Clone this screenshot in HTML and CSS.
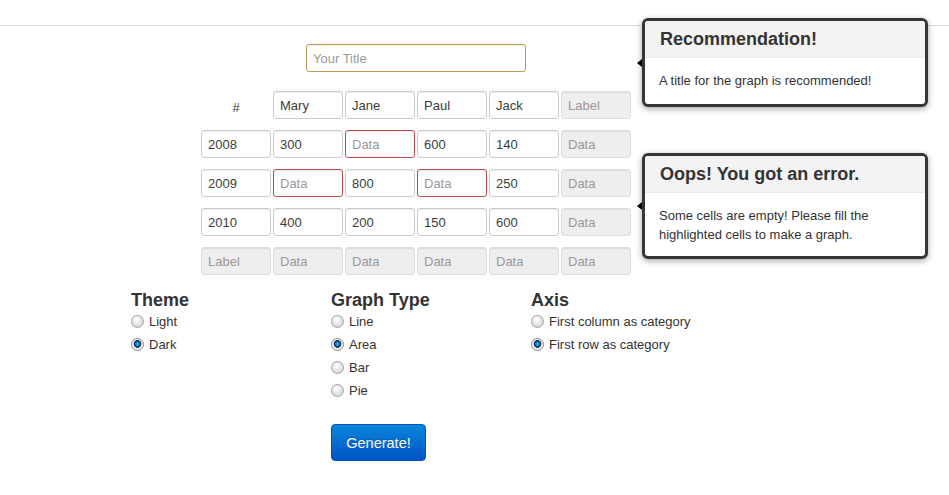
FILE: index.html
```html
<!DOCTYPE html>
<html>
<head>
<meta charset="utf-8">
<link rel="stylesheet" href="styles.css">
</head>
<body>
<div class="topbar"></div>
<div class="editor">
  <div class="title-row">
    <input class="cell title-input" type="text" placeholder="Your Title">
  </div>
  <div class="grid">
    <div class="hash">#</div>
    <input class="cell" type="text" value="Mary">
    <input class="cell" type="text" value="Jane">
    <input class="cell" type="text" value="Paul">
    <input class="cell" type="text" value="Jack">
    <input class="cell dis" type="text" placeholder="Label" disabled>

    <input class="cell" type="text" value="2008">
    <input class="cell" type="text" value="300">
    <input class="cell err" type="text" placeholder="Data">
    <input class="cell" type="text" value="600">
    <input class="cell" type="text" value="140">
    <input class="cell dis" type="text" placeholder="Data" disabled>

    <input class="cell" type="text" value="2009">
    <input class="cell err" type="text" placeholder="Data">
    <input class="cell" type="text" value="800">
    <input class="cell err" type="text" placeholder="Data">
    <input class="cell" type="text" value="250">
    <input class="cell dis" type="text" placeholder="Data" disabled>

    <input class="cell" type="text" value="2010">
    <input class="cell" type="text" value="400">
    <input class="cell" type="text" value="200">
    <input class="cell" type="text" value="150">
    <input class="cell" type="text" value="600">
    <input class="cell dis" type="text" placeholder="Data" disabled>

    <input class="cell dis" type="text" placeholder="Label" disabled>
    <input class="cell dis" type="text" placeholder="Data" disabled>
    <input class="cell dis" type="text" placeholder="Data" disabled>
    <input class="cell dis" type="text" placeholder="Data" disabled>
    <input class="cell dis" type="text" placeholder="Data" disabled>
    <input class="cell dis" type="text" placeholder="Data" disabled>
  </div>
</div>

<div class="options">
  <div class="col">
    <h3>Theme</h3>
    <label class="opt"><input type="radio" name="theme"> Light</label>
    <label class="opt"><input type="radio" name="theme" checked> Dark</label>
  </div>
  <div class="col">
    <h3>Graph Type</h3>
    <label class="opt"><input type="radio" name="type"> Line</label>
    <label class="opt"><input type="radio" name="type" checked> Area</label>
    <label class="opt"><input type="radio" name="type"> Bar</label>
    <label class="opt"><input type="radio" name="type"> Pie</label>
    <button class="btn" type="button">Generate!</button>
  </div>
  <div class="col">
    <h3>Axis</h3>
    <label class="opt"><input type="radio" name="axis"> First column as category</label>
    <label class="opt"><input type="radio" name="axis" checked> First row as category</label>
  </div>
</div>

<div class="popover pop-rec">
  <div class="pop-title">Recommendation!</div>
  <div class="pop-body">A title for the graph is recommended!</div>
</div>
<div class="popover pop-err">
  <div class="pop-title">Oops! You got an error.</div>
  <div class="pop-body">Some cells are empty! Please fill the highlighted cells to make a graph.</div>
</div>
</body>
</html>
```

FILE: styles.css
```css
html, body {
  margin: 0;
  padding: 0;
  background: #fff;
}
body {
  font-family: "Liberation Sans", Arial, sans-serif;
  font-size: 13px;
  color: #333;
}
.topbar {
  height: 25px;
  border-bottom: 1px solid #dcdcdc;
}
.editor {
  width: 430px;
  margin-left: 201px;
}
.title-row {
  display: flex;
  justify-content: center;
  margin-top: 18px;
}
.cell {
  box-sizing: border-box;
  width: 70px;
  height: 28px;
  margin: 0;
  padding: 4px 6px;
  border: 1px solid #ccc;
  border-radius: 3px;
  background: #fff;
  box-shadow: inset 0 1px 1px rgba(0,0,0,0.075);
  font-family: "Liberation Sans", Arial, sans-serif;
  font-size: 13px;
  color: #3c3c3c;
  outline: none;
}
.cell::placeholder {
  color: #999;
  opacity: 1;
}
.title-input {
  width: 220px;
  border-color: #c09853;
}
.err {
  border-color: #b94a48;
}
.dis {
  background: #eee;
  border-color: #ddd;
  color: #999;
}
.grid {
  display: grid;
  grid-template-columns: repeat(6, 70px);
  column-gap: 2px;
  row-gap: 11px;
  margin-top: 19px;
}
.hash {
  text-align: center;
  line-height: 28px;
  padding-top: 3px;
  height: 25px;
  font-size: 13px;
  color: #333;
}
.options {
  display: flex;
  margin: 15px 0 0 131px;
}
.col {
  width: 200px;
  display: flex;
  flex-direction: column;
  align-items: flex-start;
}
.col h3 {
  margin: 0;
  font-size: 18px;
  line-height: 20px;
  font-weight: bold;
  color: #333;
}
.opt {
  display: flex;
  align-items: center;
  height: 23px;
  font-size: 13px;
  color: #333;
  white-space: nowrap;
}
.opt input {
  -webkit-appearance: none;
  appearance: none;
  box-sizing: border-box;
  width: 13px;
  height: 13px;
  margin: 0 5px 0 0;
  border: 1px solid #a0a0a0;
  border-radius: 50%;
  background: radial-gradient(circle at 40% 35%, #ffffff 0, #e6e6e6 45%, #cfcfcf 100%);
}
.opt input:checked {
  border-color: #8a8a8a;
  background: radial-gradient(circle at 50% 45%, #7ec8f0 0, #1e7fc0 1.4px, #0b4a82 3px, #1c3550 3.6px, #f4f4f4 4.2px, #e2e2e2 100%);
}
.btn {
  margin-top: 22px;
  box-sizing: border-box;
  width: 95px;
  height: 37px;
  padding: 0;
  border: 1px solid #0055bb;
  border-radius: 4px;
  background: linear-gradient(#0a86da, #0053c5);
  color: #fff;
  font-family: "Liberation Sans", Arial, sans-serif;
  font-size: 14.5px;
  text-shadow: 0 -1px 0 rgba(0,0,0,0.2);
}
.popover {
  position: absolute;
  left: 642px;
  width: 286px;
  box-sizing: border-box;
  border: 3px solid #363636;
  border-radius: 6px;
  background: #fff;
  box-shadow: 0 2px 6px rgba(0,0,0,0.35);
}
.popover::before {
  content: "";
  position: absolute;
  left: -8px;
  top: 50%;
  margin-top: -4px;
  border-style: solid;
  border-width: 4px 5px 4px 0;
  border-color: transparent #000 transparent transparent;
}
.pop-rec {
  top: 18px;
  height: 89px;
}
.pop-err {
  top: 153px;
  height: 106px;
}
.pop-title {
  height: 36px;
  line-height: 37px;
  padding: 0 15px;
  background: #f3f3f3;
  border-bottom: 1px solid #ebebeb;
  border-radius: 3px 3px 0 0;
  font-size: 18px;
  font-weight: bold;
  color: #333;
}
.pop-body {
  padding: 13px 14px 10px 14px;
  font-size: 13px;
  line-height: 19px;
  color: #333;
}
```
